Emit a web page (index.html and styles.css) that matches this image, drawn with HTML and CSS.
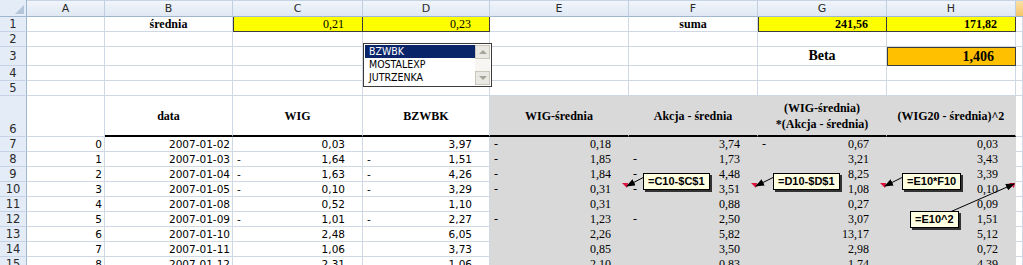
FILE: index.html
```html
<!DOCTYPE html>
<html lang="pl">
<head>
<meta charset="utf-8">
<title>Beta</title>
<link rel="stylesheet" href="styles.css">
</head>
<body>
<div class="sheet">
  <!-- column headers -->
  <div class="corner"></div>
  <div class="ch">A</div><div class="ch">B</div><div class="ch">C</div><div class="ch">D</div>
  <div class="ch">E</div><div class="ch">F</div><div class="ch">G</div><div class="ch">H</div><div class="ch sel"></div>

  <!-- row 1 -->
  <div class="rh">1</div>
  <div class="c"></div>
  <div class="c lbl">średnia</div>
  <div class="c y yl ser"><span class="v">0,21</span></div>
  <div class="c y ser"><span class="v">0,23</span></div>
  <div class="c"></div>
  <div class="c lbl">suma</div>
  <div class="c y yl ser bold"><span class="v">241,56</span></div>
  <div class="c y ser bold"><span class="v">171,82</span></div>
  <div class="c"></div>

  <!-- row 2 -->
  <div class="rh">2</div>
  <div class="c"></div><div class="c"></div><div class="c"></div><div class="c"></div>
  <div class="c"></div><div class="c"></div><div class="c"></div><div class="c"></div><div class="c"></div>

  <!-- row 3 -->
  <div class="rh">3</div>
  <div class="c"></div><div class="c"></div><div class="c"></div><div class="c"></div>
  <div class="c"></div><div class="c"></div>
  <div class="c lbl big">Beta</div>
  <div class="c o ser bold big"><span class="v">1,406</span></div>
  <div class="c"></div>

  <!-- row 4 -->
  <div class="rh">4</div>
  <div class="c"></div><div class="c"></div><div class="c"></div><div class="c"></div>
  <div class="c"></div><div class="c"></div><div class="c"></div><div class="c"></div><div class="c"></div>

  <!-- row 5 -->
  <div class="rh">5</div>
  <div class="c"></div><div class="c"></div><div class="c"></div><div class="c"></div>
  <div class="c"></div><div class="c"></div><div class="c"></div><div class="c"></div><div class="c"></div>

  <!-- row 6 -->
  <div class="rh bottom">6</div>
  <div class="c"></div>
  <div class="c hd">data</div>
  <div class="c hd">WIG</div>
  <div class="c hd">BZWBK</div>
  <div class="c hd g">WIG-średnia</div>
  <div class="c hd g">Akcja - średnia</div>
  <div class="c hd g">(WIG-średnia)<br>*(Akcja - średnia)</div>
  <div class="c hd g">(WIG20 - średnia)^2</div>
  <div class="c"></div>

  <!-- row 7 -->
  <div class="rh">7</div>
  <div class="c num">0</div><div class="c num">2007-01-02</div>
  <div class="c acc"><span class="v">0,03</span></div>
  <div class="c acc"><span class="v">3,97</span></div>
  <div class="c acc ser g"><span>-</span><span class="v">0,18</span></div>
  <div class="c acc ser g"><span class="v">3,74</span></div>
  <div class="c acc ser g"><span>-</span><span class="v">0,67</span></div>
  <div class="c acc ser g"><span class="v">0,03</span></div>
  <div class="c"></div>

  <!-- row 8 -->
  <div class="rh">8</div>
  <div class="c num">1</div><div class="c num">2007-01-03</div>
  <div class="c acc"><span>-</span><span class="v">1,64</span></div>
  <div class="c acc"><span>-</span><span class="v">1,51</span></div>
  <div class="c acc ser g"><span>-</span><span class="v">1,85</span></div>
  <div class="c acc ser g"><span>-</span><span class="v">1,73</span></div>
  <div class="c acc ser g"><span class="v">3,21</span></div>
  <div class="c acc ser g"><span class="v">3,43</span></div>
  <div class="c"></div>

  <!-- row 9 -->
  <div class="rh">9</div>
  <div class="c num">2</div><div class="c num">2007-01-04</div>
  <div class="c acc"><span>-</span><span class="v">1,63</span></div>
  <div class="c acc"><span>-</span><span class="v">4,26</span></div>
  <div class="c acc ser g"><span>-</span><span class="v">1,84</span></div>
  <div class="c acc ser g"><span>-</span><span class="v">4,48</span></div>
  <div class="c acc ser g"><span class="v">8,25</span></div>
  <div class="c acc ser g"><span class="v">3,39</span></div>
  <div class="c"></div>

  <!-- row 10 -->
  <div class="rh">10</div>
  <div class="c num">3</div><div class="c num">2007-01-05</div>
  <div class="c acc"><span>-</span><span class="v">0,10</span></div>
  <div class="c acc"><span>-</span><span class="v">3,29</span></div>
  <div class="c acc ser g cm"><span>-</span><span class="v">0,31</span></div>
  <div class="c acc ser g cm"><span>-</span><span class="v">3,51</span></div>
  <div class="c acc ser g cm"><span class="v">1,08</span></div>
  <div class="c acc ser g cm"><span class="v">0,10</span></div>
  <div class="c"></div>

  <!-- row 11 -->
  <div class="rh">11</div>
  <div class="c num">4</div><div class="c num">2007-01-08</div>
  <div class="c acc"><span class="v">0,52</span></div>
  <div class="c acc"><span class="v">1,10</span></div>
  <div class="c acc ser g"><span class="v">0,31</span></div>
  <div class="c acc ser g"><span class="v">0,88</span></div>
  <div class="c acc ser g"><span class="v">0,27</span></div>
  <div class="c acc ser g"><span class="v">0,09</span></div>
  <div class="c"></div>

  <!-- row 12 -->
  <div class="rh">12</div>
  <div class="c num">5</div><div class="c num">2007-01-09</div>
  <div class="c acc"><span>-</span><span class="v">1,01</span></div>
  <div class="c acc"><span>-</span><span class="v">2,27</span></div>
  <div class="c acc ser g"><span>-</span><span class="v">1,23</span></div>
  <div class="c acc ser g"><span>-</span><span class="v">2,50</span></div>
  <div class="c acc ser g"><span class="v">3,07</span></div>
  <div class="c acc ser g"><span class="v">1,51</span></div>
  <div class="c"></div>

  <!-- row 13 -->
  <div class="rh">13</div>
  <div class="c num">6</div><div class="c num">2007-01-10</div>
  <div class="c acc"><span class="v">2,48</span></div>
  <div class="c acc"><span class="v">6,05</span></div>
  <div class="c acc ser g"><span class="v">2,26</span></div>
  <div class="c acc ser g"><span class="v">5,82</span></div>
  <div class="c acc ser g"><span class="v">13,17</span></div>
  <div class="c acc ser g"><span class="v">5,12</span></div>
  <div class="c"></div>

  <!-- row 14 -->
  <div class="rh">14</div>
  <div class="c num">7</div><div class="c num">2007-01-11</div>
  <div class="c acc"><span class="v">1,06</span></div>
  <div class="c acc"><span class="v">3,73</span></div>
  <div class="c acc ser g"><span class="v">0,85</span></div>
  <div class="c acc ser g"><span class="v">3,50</span></div>
  <div class="c acc ser g"><span class="v">2,98</span></div>
  <div class="c acc ser g"><span class="v">0,72</span></div>
  <div class="c"></div>

  <!-- row 15 -->
  <div class="rh">15</div>
  <div class="c num">8</div><div class="c num">2007-01-12</div>
  <div class="c acc"><span class="v">2,31</span></div>
  <div class="c acc"><span class="v">1,06</span></div>
  <div class="c acc ser g"><span class="v">2,10</span></div>
  <div class="c acc ser g"><span class="v">0,83</span></div>
  <div class="c acc ser g"><span class="v">1,74</span></div>
  <div class="c acc ser g"><span class="v">4,39</span></div>
  <div class="c"></div>
</div>

<!-- list box control -->
<div class="listbox">
  <div class="items">
    <div class="item on">BZWBK</div>
    <div class="item">MOSTALEXP</div>
    <div class="item">JUTRZENKA</div>
  </div>
  <div class="sb">
    <div class="sbb"><span class="tri up"></span></div>
    <div class="sbt"></div>
    <div class="sbb"><span class="tri dn"></span></div>
  </div>
</div>

<!-- comment connectors -->
<svg class="arrows" width="1023" height="265" viewBox="0 0 1023 265">
  <defs>
    <marker id="ah" markerWidth="9" markerHeight="7" refX="8" refY="3.5" orient="auto" markerUnits="userSpaceOnUse">
      <path d="M0 0 L9 3.5 L0 7 Z" fill="#000"/>
    </marker>
  </defs>
  <line x1="646" y1="176" x2="627" y2="186" stroke="#000" stroke-width="1" marker-end="url(#ah)"/>
  <line x1="776" y1="176" x2="756" y2="186" stroke="#000" stroke-width="1" marker-end="url(#ah)"/>
  <line x1="905" y1="176" x2="885" y2="186" stroke="#000" stroke-width="1" marker-end="url(#ah)"/>
  <line x1="950" y1="212" x2="1014" y2="184" stroke="#000" stroke-width="1" marker-end="url(#ah)"/>
</svg>

<div class="cbox b1">=C10-$C$1</div>
<div class="cbox b2">=D10-$D$1</div>
<div class="cbox b3">=E10*F10</div>
<div class="cbox b4">=E10^2</div>
</body>
</html>
```
FILE: styles.css
```css
* { box-sizing: border-box; }
html, body { margin: 0; padding: 0; background: #fff; }
body { width: 1023px; height: 265px; position: relative; overflow: hidden; }

.sheet {
  display: grid;
  grid-template-columns: 27px 78px 128px 130px 127px 139px 129px 129px 129px 1fr;
  grid-template-rows: 17px 15px 15px 19px 15px 15px 41px repeat(9, 15px);
  font-family: "DejaVu Sans", Verdana, sans-serif;
  font-size: 10.5px;
  color: #000;
}

/* headers */
.corner {
  position: relative;
  background: #e4ecf7;
  border-right: 1px solid #9eb6ce;
  border-bottom: 1px solid #9eb6ce;
}
.corner::after {
  content: "";
  position: absolute;
  right: 2px;
  bottom: 2px;
  border-left: 9px solid transparent;
  border-bottom: 9px solid #b6c6da;
}
.ch {
  background: linear-gradient(#f1f5fb, #dfe8f4);
  border-right: 1px solid #c0cee0;
  border-bottom: 1px solid #9eb6ce;
  border-top: 1px solid #c7d4e5;
  display: flex;
  align-items: center;
  justify-content: center;
  color: #2a2a2a;
  font-size: 11px;
}
.ch.sel { background: linear-gradient(#fbe1a8, #f5c564); border-right: 0; }
.rh {
  background: #e4ecf7;
  border-right: 1px solid #9eb6ce;
  border-bottom: 1px solid #c5d3e4;
  display: flex;
  align-items: center;
  justify-content: center;
  color: #2a2a2a;
  font-size: 11.5px;
  line-height: 12px;
}
.rh.bottom { align-items: flex-end; padding-bottom: 1px; }

/* cells */
.c {
  border-right: 1px solid #d0d7e5;
  border-bottom: 1px solid #d0d7e5;
  display: flex;
  align-items: center;
  white-space: nowrap;
  overflow: hidden;
  min-width: 0;
}
.v { margin-left: auto; }
.num { justify-content: flex-end; padding-right: 2px; }
.acc { padding: 0 17px 0 4px; }
.ser { font-family: "Liberation Serif", "Times New Roman", serif; font-size: 12px; }
.bold { font-weight: bold; }
.big { font-size: 14px; }
.lbl {
  justify-content: center;
  font-family: "Liberation Serif", "Times New Roman", serif;
  font-weight: bold;
  font-size: 12px;
}
.lbl.big { font-size: 14px; }

.y { background: #ffff00; border-right: 1px solid #3c3c3c; border-bottom: 1px solid #3c3c3c; padding-right: 18px; }
.yl { border-left: 1px solid #3c3c3c; }
.o { background: #ffc000; border: 1px solid #3c3c3c; padding-right: 21px; }

.hd {
  justify-content: center;
  text-align: center;
  font-family: "Liberation Serif", "Times New Roman", serif;
  font-weight: bold;
  font-size: 12px;
  line-height: 16px;
  border-bottom: 2px solid #000;
}
.g { background: #d9d9d9; border-right-color: #d9d9d9; border-bottom-color: #d9d9d9; }
.hd.g { border-bottom-color: #000; }

.cm { position: relative; overflow: visible; }
.cm::after {
  content: "";
  position: absolute;
  top: 1px;
  right: 0;
  border-left: 5px solid transparent;
  border-right: 1px solid transparent;
  border-top: 5px solid #e0103a;
}

/* list box */
.listbox {
  position: absolute;
  left: 363px;
  top: 43px;
  width: 129px;
  height: 44px;
  border: 1px solid #3a3a3a;
  background: #fff;
  display: flex;
  padding: 1px;
}
.items { flex: 1; display: flex; flex-direction: column; }
.item {
  height: 13px;
  line-height: 13px;
  padding-left: 4px;
  font-family: "DejaVu Sans Condensed", "Liberation Sans Narrow", "Liberation Sans", sans-serif;
  font-size: 10.5px;
  color: #000;
}
.item.on { background: #0a246a; color: #fff; }
.sb { width: 15px; display: flex; flex-direction: column; background: #f2f1ec; }
.sbb {
  height: 14px;
  background: #e9e8e2;
  border: 1px solid #c9c7bc;
  display: flex;
  align-items: center;
  justify-content: center;
}
.sbt { flex: 1; background: #f7f6f2; }
.tri { width: 0; height: 0; border-left: 4px solid transparent; border-right: 4px solid transparent; }
.tri.up { border-bottom: 4px solid #a7a59a; }
.tri.dn { border-top: 4px solid #a7a59a; }

/* comments */
.arrows { position: absolute; left: 0; top: 0; pointer-events: none; }
.cbox {
  position: absolute;
  height: 17px;
  background: #ffffe1;
  border: 1px solid #000;
  box-shadow: 2px 2px 0 #333;
  font-family: "Liberation Sans", Arial, sans-serif;
  font-weight: bold;
  font-size: 11px;
  line-height: 15px;
  padding: 0 4px;
  white-space: nowrap;
}
.b1 { left: 643px; top: 173px; }
.b2 { left: 773px; top: 173px; }
.b3 { left: 902px; top: 173px; }
.b4 { left: 910px; top: 211px; }
```
